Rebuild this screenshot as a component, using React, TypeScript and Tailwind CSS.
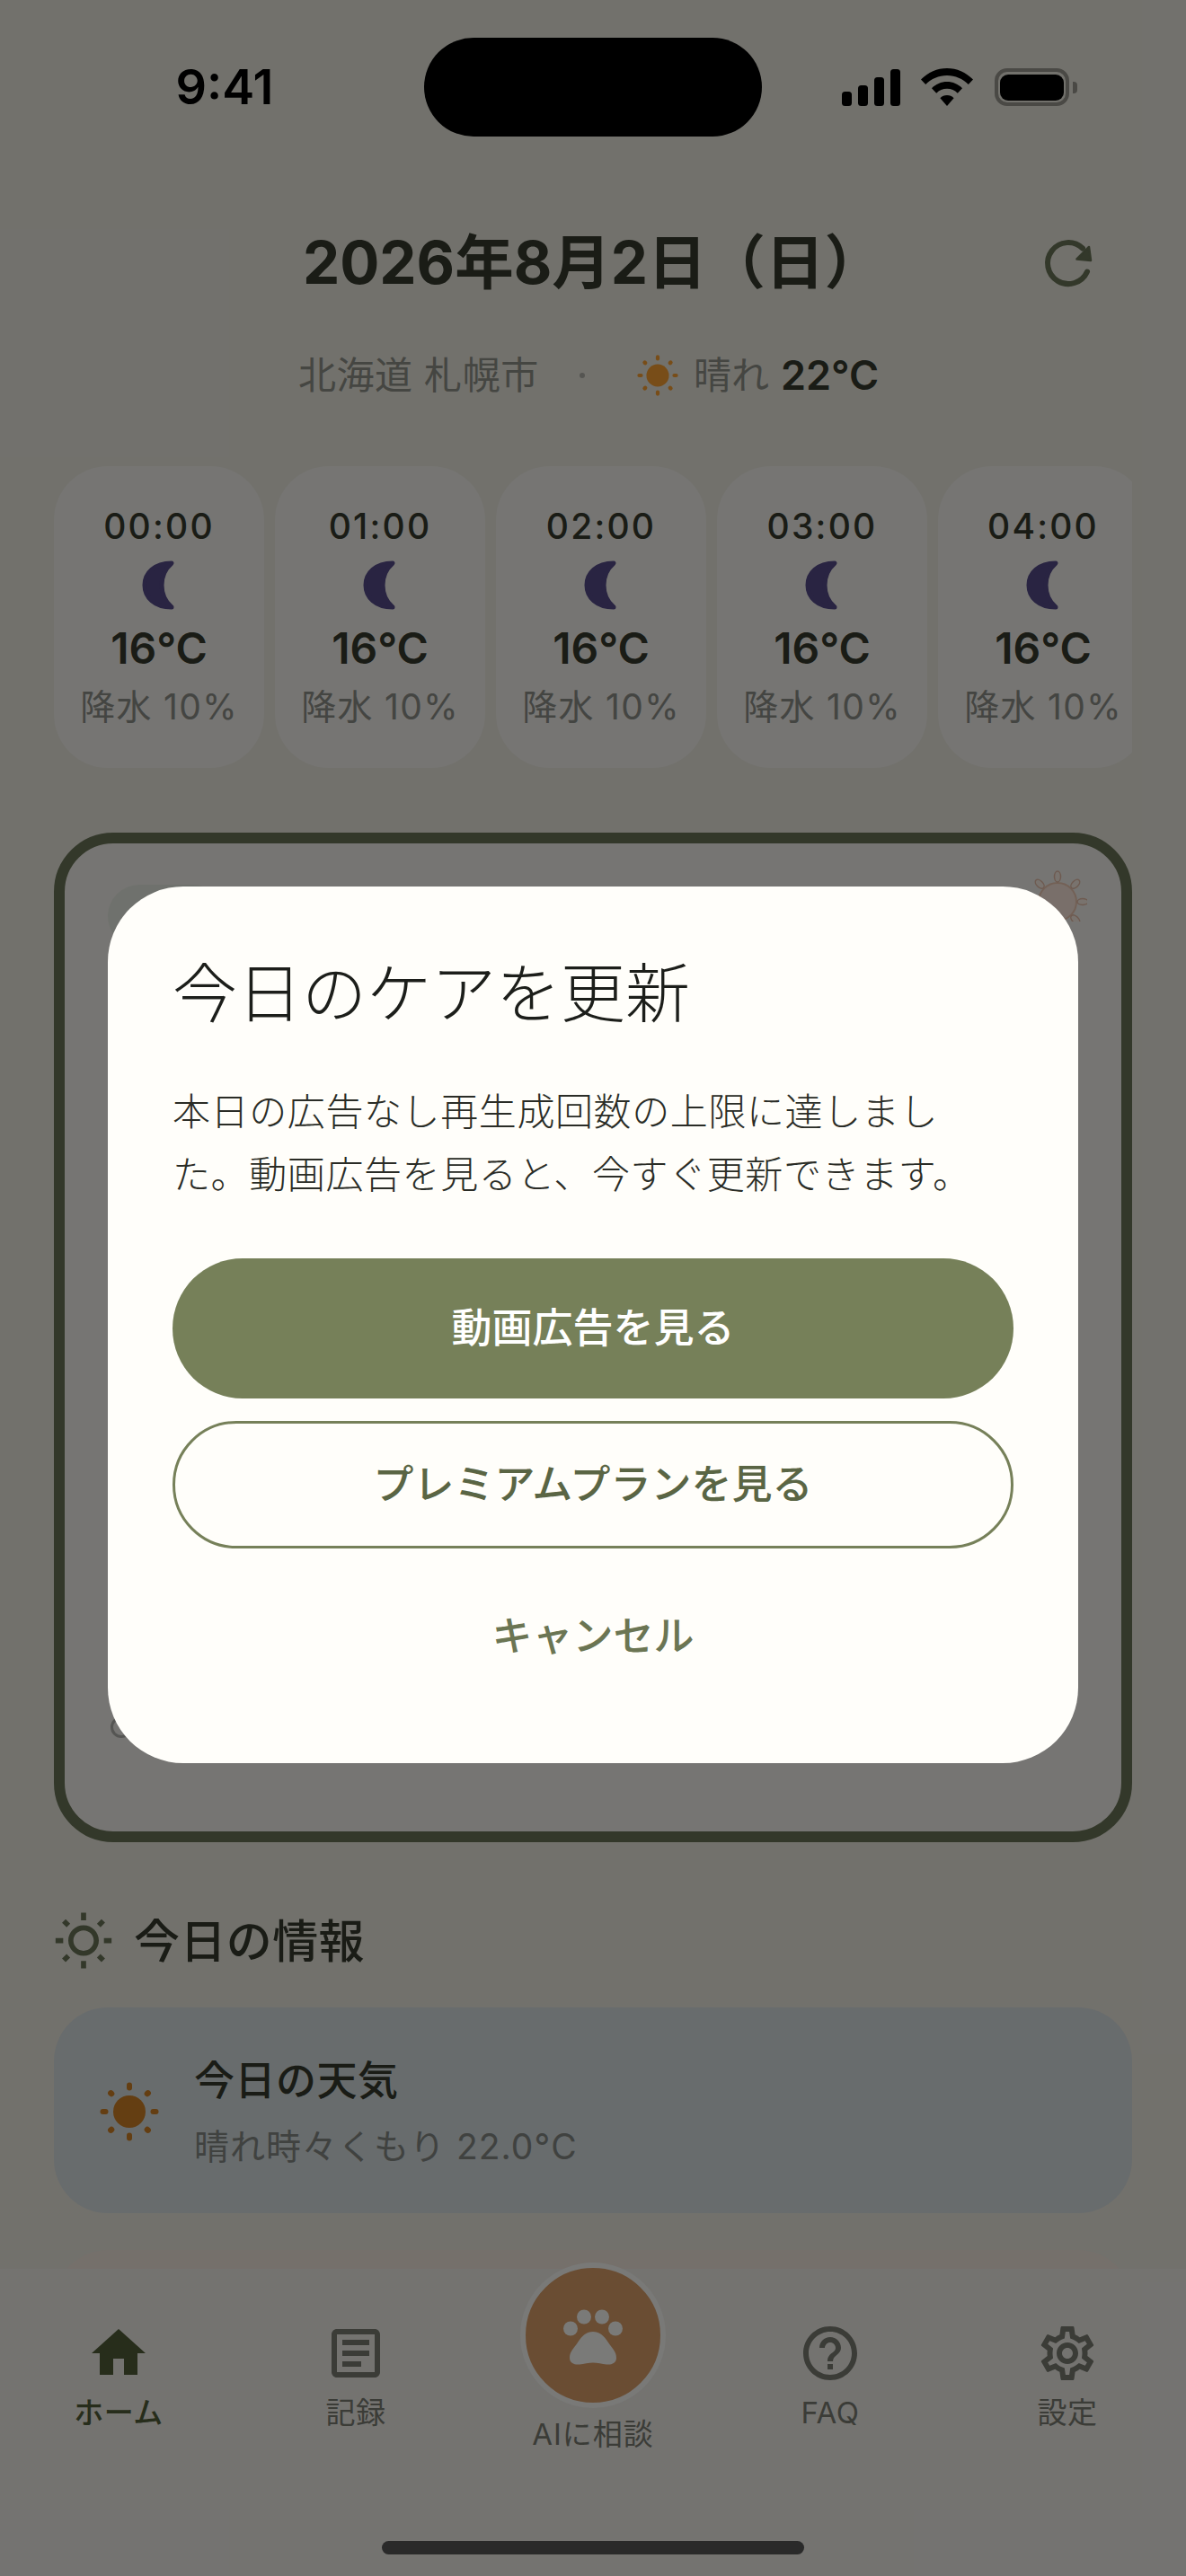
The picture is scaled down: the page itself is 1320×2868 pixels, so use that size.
import { MdHelpOutline, MdHome, MdOutlineArticle, MdOutlineSettings, MdOutlineWbSunny } from "react-icons/md";

const hours = ["00:00", "01:00", "02:00", "03:00", "04:00"];

function SolidSun({ size, color }: { size: number; color: string }) {
  return (
    <svg width={size} height={size} viewBox="0 0 66 66" className="shrink-0">
      <circle cx="33" cy="33" r="18" fill={color} />
      {[0, 90, 180, 270].map((a) => (
        <line key={a} x1="33" y1="3.500" x2="33" y2="6.500" stroke={color} strokeWidth="6" strokeLinecap="round" transform={`rotate(${a} 33 33)`} />
      ))}
      {[45, 135, 225, 315].map((a) => (
        <line key={a} x1="33" y1="3.800" x2="33" y2="4.800" stroke={color} strokeWidth="6.500" strokeLinecap="round" transform={`rotate(${a} 33 33)`} />
      ))}
    </svg>
  );
}

function Moon() {
  return (
    <svg width="38" height="57" viewBox="0 0 38 57">
      <path
        d="M33 4C14 4 3 15 3 28.5 3 42 14 53 33 53 26 47 22 38 22 28.5 22 19 26 10 33 4Z"
        fill="#524884"
        stroke="#524884"
        strokeWidth="5"
        strokeLinejoin="round"
      />
    </svg>
  );
}

function RefreshIcon() {
  return (
    <svg width="60" height="60" viewBox="0 0 60 60" fill="none">
      <path d="M51 39.500A23 23 0 1 1 46 13.500" stroke="#667054" strokeWidth="6" strokeLinecap="round" />
      <path d="M53 12L55 27 39.500 25.500Z" fill="#667054" stroke="#667054" strokeWidth="2.500" strokeLinejoin="round" />
    </svg>
  );
}

function Paw() {
  return (
    <svg width="150" height="150" viewBox="0 0 150 150" fill="#f4f4f0">
      <circle cx="50" cy="67.500" r="8" />
      <circle cx="65" cy="54.500" r="8" />
      <circle cx="85" cy="54.500" r="8" />
      <circle cx="100" cy="67.500" r="8" />
      <path d="M75 71C82 71 87 75 92 83 96 89 101 93 101 100 101 106 96 108 90 107.500 85 107 80 105.500 75 105.500 70 105.500 65 107 60 107.500 54 108 49 106 49 100 49 93 54 89 58 83 63 75 68 71 75 71Z" />
    </svg>
  );
}

function HourCard({ time }: { time: string }) {
  return (
    <div className="flex h-[336px] w-[234px] shrink-0 flex-col items-center rounded-[60px] bg-[#ecebe6] pt-[43px]">
      <div className="h-[48px] text-[39px] leading-[48px] font-medium tracking-[2.2px] text-[#34382c]">{time}</div>
      <div className="mt-[5px] flex h-[72px] items-center">
        <Moon />
      </div>
      <div className="mt-[5px] h-[60px] text-[48px] leading-[60px] font-semibold text-[#34382c]">16°C</div>
      <div className="mt-[11px] h-[48px] text-[39px] leading-[48px] tracking-[1.3px] whitespace-nowrap text-[#888a84]">降水 10%</div>
    </div>
  );
}

function NavItem({ icon, label, active }: { icon: React.ReactNode; label: string; active?: boolean }) {
  return (
    <div className={`flex flex-col items-center pt-[58px] ${active ? "text-[#4e5a36]" : "text-[#76786f]"}`}>
      {icon}
      <div className={`mt-[8px] h-[44px] text-[33px] leading-[44px] tracking-[0.5px] ${active ? "font-medium" : ""}`}>{label}</div>
    </div>
  );
}

export default function App() {
  return (
    <div className="relative h-[2868px] w-[1320px] overflow-hidden bg-[#e4e2d9] font-['Inter','Noto_Sans_CJK_JP',sans-serif]">
      {/* status bar */}
      <div className="relative z-30 mt-[42px] flex h-[110px] items-center">
        <div className="flex w-[472px] justify-center pl-[28px] text-[54px] leading-none font-semibold text-black">9:41</div>
        <div className="h-[110px] w-[376px] rounded-[55px] bg-black" />
        <div className="flex items-end pl-[89px]">
          <svg width="65" height="41" viewBox="0 0 65 41" className="mt-[1px]">
            <rect x="0" y="25" width="11" height="16" rx="3.5" />
            <rect x="18" y="18" width="11" height="23" rx="3.5" />
            <rect x="36" y="9" width="11" height="32" rx="3.5" />
            <rect x="54" y="0" width="11" height="41" rx="3.5" />
          </svg>
          <svg width="58" height="42" viewBox="0 0 58 42" className="ml-[23px]">
            <path d="M29 0C40 0 50 4.600 58 12.500L52.800 18C46.500 11.800 38.300 8 29 8 19.700 8 11.500 11.800 5.200 18L0 12.500C8 4.600 18 0 29 0Z" />
            <path d="M29 15C35.500 15 41.500 17.700 46 22.200L40.800 27.700C37.700 24.700 33.600 22.800 29 22.800 24.400 22.800 20.300 24.700 17.200 27.700L12 22.200C16.500 17.700 22.500 15 29 15Z" />
            <path d="M29 30C32 30 34.600 31.200 36.600 33.200L29 42 21.400 33.200C23.400 31.200 26 30 29 30Z" />
          </svg>
          <div className="ml-[24px] flex items-center">
            <div className="flex h-[42px] w-[83px] items-center justify-center rounded-[14px] border-[4px] border-[#4a4945]">
              <div className="h-[29px] w-[71px] rounded-[9px] bg-black" />
            </div>
            <div className="ml-[4px] h-[13px] w-[5px] rounded-r-[4px] bg-[#4a4945]" />
          </div>
        </div>
      </div>

      {/* date header */}
      <div className="mt-[96px] grid h-[90px] grid-cols-[1fr_auto_1fr] items-center">
        <div />
        <div className="text-[65.5px] leading-[90px] font-bold whitespace-nowrap text-[#34382c]">2026年8月2日（日）</div>
        <div className="flex justify-end pr-[101px]">
          <RefreshIcon />
        </div>
      </div>

      {/* location and weather */}
      <div className="mt-[50px] flex h-[60px] items-center justify-center pr-[10px] text-[42px] leading-[60px] text-[#8a8c84]">
        <span className="tracking-[0.6px]">北海道 札幌市</span>
        <span className="mr-[58px] ml-[45px] h-[6px] w-[6px] rounded-full bg-[#aaaaa4]" />
        <SolidSun size={46} color="#f09a30" />
        <span className="ml-[17px]">晴れ</span>
        <span className="ml-[13px] text-[45px] font-semibold text-[#34382c]">22°C</span>
      </div>

      {/* hourly forecast */}
      <div className="mx-[60px] mt-[71px] flex gap-[12px] overflow-hidden">
        {hours.map((h) => (
          <HourCard key={h} time={h} />
        ))}
      </div>

      {/* main care card (behind the dialog) */}
      <div className="relative mx-[60px] mt-[72px] h-[1124px] rounded-[66px] border-[12px] border-[#667054] bg-[#edebe6] px-[48px] pt-[46px]">
        <div className="h-[70px] w-[130px] rounded-full bg-[#dfe3da]" />
        <svg width="66" height="66" viewBox="0 0 66 66" className="absolute top-[21px] right-[38px] opacity-80">
          <circle cx="33" cy="44" r="21" fill="#f4dcd0" stroke="#e6b8a0" strokeWidth="2" />
          {[-45, 0, 45, 90, 135].map((a) => (
            <ellipse
              key={a}
              cx="33"
              cy="16"
              rx="3.500"
              ry="6"
              fill="#f4e6dc"
              stroke="#d8a890"
              strokeWidth="1.500"
              transform={`rotate(${a} 33 44)`}
            />
          ))}
        </svg>
        <div className="absolute top-[972px] left-[51px] h-[24px] w-[24px] rounded-full border-[3px] border-[#aaaaa6]" />
      </div>

      {/* today's info */}
      <div className="mx-[60px] mt-[76px] flex h-[70px] items-center gap-[22px]">
        <MdOutlineWbSunny size={68} color="#667054" className="-ml-[1px]" />
        <div className="text-[51px] leading-[70px] font-medium tracking-[0.4px] text-[#34382c]">今日の情報</div>
      </div>
      <div className="mx-[60px] mt-[38px] flex h-[229px] items-center rounded-[60px] bg-[#d0d8da] pt-[3px] pl-[51px]">
        <SolidSun size={66} color="#c87c24" />
        <div className="ml-[39px] flex flex-col">
          <div className="text-[45px] leading-[60px] font-medium tracking-[0.5px] text-[#34382c]">今日の天気</div>
          <div className="mt-[18px] text-[39px] leading-[50px] tracking-[1px] text-[#808480]">晴れ時々くもり 22.0°C</div>
        </div>
      </div>
      <div className="mx-[60px] mt-[41px] h-[120px] rounded-[60px] bg-[#eae0d6]" />

      {/* bottom navigation */}
      <div className="absolute right-0 bottom-0 left-0 flex h-[342px] flex-col bg-[#e8e6e1] pb-[24px]">
        <div className="grid grid-cols-5">
          <NavItem active label="ホーム" icon={<MdHome size={72} />} />
          <NavItem label="記録" icon={<MdOutlineArticle size={72} />} />
          <div className="-mt-[7px] flex flex-col items-center">
            <div className="flex h-[162px] w-[162px] items-center justify-center rounded-full border-[6px] border-[#f2f2ee] bg-[#d49a66]">
              <Paw />
            </div>
            <div className="mt-[7px] h-[44px] text-[33px] leading-[44px] tracking-[1px] whitespace-nowrap text-[#76786f]">AIに相談</div>
          </div>
          <NavItem label="FAQ" icon={<MdHelpOutline size={72} />} />
          <NavItem label="設定" icon={<MdOutlineSettings size={72} />} />
        </div>
        <div className="mx-auto mt-auto h-[15px] w-[470px] rounded-full bg-[#545454]" />
      </div>

      {/* dim layer with dialog */}
      <div className="absolute inset-0 z-20 flex justify-center bg-black/50 pt-[987px]">
        <div className="h-[976px] w-[1080px] rounded-[84px] bg-[#fffefa] px-[72px] pt-[72px]">
          <div className="h-[94px] text-[72px] leading-[94px] font-light text-[#1c1e1a]">今日のケアを更新</div>
          <p className="mt-[50px] pr-[30px] text-[42px] leading-[70px] font-light tracking-[0.6px] text-[#2a2c26]">
            本日の広告なし再生成回数の上限に達しました。動画広告を見ると、今すぐ更新できます。
          </p>
          <div className="mt-[58px] flex h-[156px] items-center justify-center rounded-[78px] bg-[#768059] text-[45px] font-medium text-white">
            動画広告を見る
          </div>
          <div className="mt-[25px] flex h-[142px] items-center justify-center rounded-[71px] border-[3px] border-[#768059] text-[45px] font-medium text-[#5a6544]">
            プレミアムプランを見る
          </div>
          <div className="mt-[62px] text-center text-[45px] leading-[72px] font-medium text-[#6b7553]">キャンセル</div>
        </div>
      </div>
    </div>
  );
}
